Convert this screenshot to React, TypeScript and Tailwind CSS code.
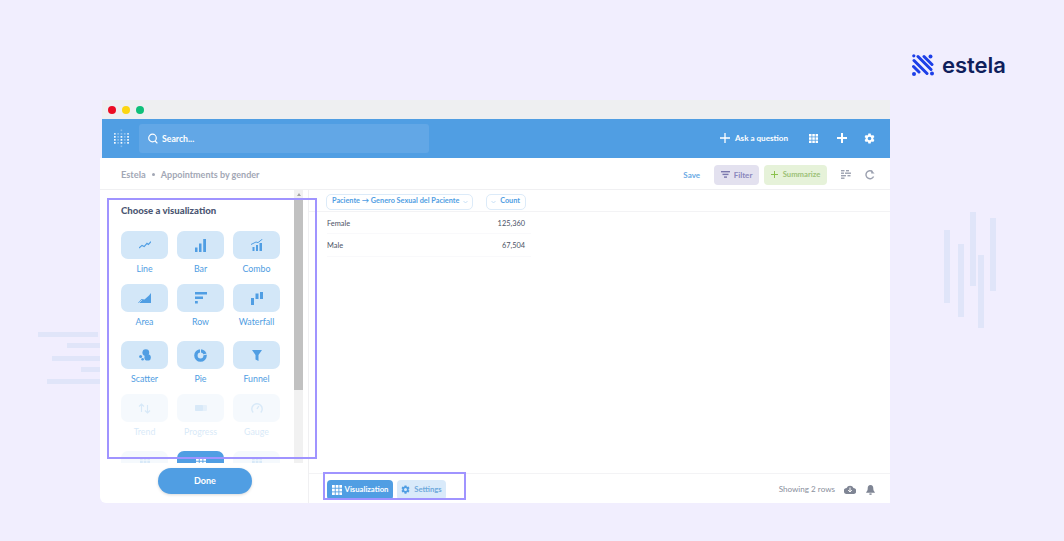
import React from "react";

const Dots = () => {
  const cols = [0, 3.3, 6.6, 9.9, 13.2];
  const rowsY = [4, 7, 10, 13];
  return (
    <svg width="15" height="19" viewBox="0 0 15 19" fill="#fff">
      <rect x="6.6" y="0.500" width="1.600" height="1.600" opacity=".3" />
      <rect x="6.6" y="16.500" width="1.600" height="1.600" opacity=".3" />
      {cols.flatMap((x, ci) =>
        rowsY.map((y, ri) => {
          const strong = (ci === 0 || ci === 2 || ci === 4) && ri !== 0 ? 0.95 : ri === 0 && ci % 4 === 0 ? 0.75 : 0.35;
          return <rect key={`${x}-${y}`} x={x} y={y} width="1.700" height="1.700" opacity={strong} />;
        })
      )}
    </svg>
  );
};

const Plus = ({ s = 10, w = 2, c = "#fff" }: { s?: number; w?: number; c?: string }) => (
  <svg width={s} height={s} viewBox="0 0 10 10" stroke={c} strokeWidth={w}><path d="M5 0v10M0 5h10" /></svg>
);

const Gear = ({ s = 11, c = "#fff" }: { s?: number; c?: string }) => (
  <svg width={s} height={s} viewBox="0 0 24 24">
    <path fill={c} fillRule="evenodd" d="M9.5 1h5l.7 3.2 1.900 1.100 3.100-1 2.500 4.400-2.400 2.200v2.200l2.400 2.200-2.500 4.400-3.100-1-1.900 1.100-.7 3.200h-5l-.7-3.200-1.900-1.100-3.100 1-2.500-4.400 2.400-2.200v-2.200L1.300 8.700l2.500-4.400 3.100 1 1.900-1.100zM12 8a4 4 0 1 0 0 8 4 4 0 0 0 0-8z" />
  </svg>
);

const Grid = ({ s = 9, c = "#fff" }: { s?: number; c?: string }) => (
  <svg width={s} height={s} viewBox="0 0 9 9" fill={c}>
    {[0, 3.3, 6.6].flatMap((x) => [0, 3.3, 6.6].map((y) => <rect key={`${x}-${y}`} x={x} y={y} width="2.500" height="2.500" />))}
  </svg>
);

const B = "#509ee3";
const icons: Record<string, React.ReactNode> = {
  Line: <svg width="12" height="8" viewBox="0 0 12 8" fill="none" stroke={B} strokeWidth="1.200"><path d="M0 7l3-2.600 2.200 1.200L8 2.400l1.400 1L12 .6" /></svg>,
  Bar: <svg width="11" height="13" viewBox="0 0 11 13" fill={B}><rect y="8.500" width="2.500" height="4.500" /><rect x="4" y="4.500" width="2.500" height="8.500" /><rect x="8.200" width="2.800" height="13" /></svg>,
  Combo: <svg width="12" height="12" viewBox="0 0 12 12" fill={B}><rect x="1.500" y="8" width="2" height="4" /><rect x="5" y="6" width="2" height="6" /><rect x="8.500" y="4" width="2.500" height="8" /><path d="M0 5.500L5 3l2 .6L11.500 0" fill="none" stroke={B} strokeWidth="1" /></svg>,
  Area: <svg width="13" height="10" viewBox="0 0 13 10" fill={B}><path d="M0 10l3.500-4 3 .5L11 2.500 13 0v10z" /><path d="M1 10l3-3" stroke="#d3e7f8" strokeWidth=".7" /></svg>,
  Row: <svg width="12" height="12" viewBox="0 0 12 12" fill={B}><rect width="12" height="2.500" /><rect y="4.500" width="8" height="2.500" /><rect y="9" width="2.800" height="2.500" /></svg>,
  Waterfall: <svg width="12" height="13" viewBox="0 0 12 13" fill={B}><rect y="6" width="3" height="7" /><rect x="4.500" y="1.500" width="3" height="5.500" /><rect x="9" width="3" height="7" /></svg>,
  Scatter: <svg width="12" height="12" viewBox="0 0 12 12" fill={B}><circle cx="6.800" cy="3.600" r="3.400" /><circle cx="8.600" cy="8.400" r="3.200" /><circle cx="1.600" cy="7.400" r="1.500" /><circle cx="3.600" cy="10.200" r="1.300" /></svg>,
  Pie: <svg width="13" height="13" viewBox="0 0 13 13" fill="none"><circle cx="6.500" cy="6.500" r="4.600" stroke={B} strokeWidth="3.400" /><path d="M6.500 6.500V0M6.500 6.500L13 5" stroke="#d3e7f8" strokeWidth="1" /></svg>,
  Funnel: <svg width="10" height="11" viewBox="0 0 10 11" fill={B}><path d="M0 0h10L6.500 5v6l-3-1.600V5z" /></svg>,
  Trend: <svg width="13" height="11" viewBox="0 0 13 11" fill="none" stroke={B} strokeWidth="1.100"><path d="M3.500 9V1M1 3.500L3.500 1 6 3.500M9.500 2v8M7 7.500l2.500 2.500L12 7.500" /></svg>,
  Progress: <svg width="12" height="6" viewBox="0 0 12 6"><rect width="12" height="6" rx="1" fill={B} opacity=".55" /><rect width="8" height="6" rx="1" fill={B} /></svg>,
  Gauge: <svg width="12" height="12" viewBox="0 0 12 12" fill="none" stroke={B} strokeWidth="1.400"><path d="M2.200 10.500A5.200 5.200 0 1 1 9.800 10.500" /><path d="M6 7l1.800-3" /></svg>,
};

const rows = [
  { names: ["Line", "Bar", "Combo"], mt: "mt-0" },
  { names: ["Area", "Row", "Waterfall"], mt: "mt-[6px]" },
  { names: ["Scatter", "Pie", "Funnel"], mt: "mt-[10px]" },
];
const faded = ["Trend", "Progress", "Gauge"];

const Tile = ({ name, dim }: { name: string; dim?: boolean }) => (
  <div className={`w-[47px] flex flex-col items-center ${dim ? "opacity-[0.22]" : ""}`}>
    <div className="w-[47px] h-[28px] rounded-[7px] bg-[#d3e7f8] flex items-center justify-center">{icons[name]}</div>
    <div className="h-[19px] flex items-center text-[8.800px] font-normal text-[#4f9de2] whitespace-nowrap">{name}</div>
  </div>
);

const App = () => (
  <div className="relative w-[1064px] h-[541px] overflow-hidden bg-[#f1eefe] font-['Lato',sans-serif]">
    {/* decorative bars */}
    {[[944, 230, 73], [958, 244, 73], [970, 212, 74], [978, 255, 73], [990, 218, 73]].map(([x, y, h]) => (
      <div key={x} className="absolute w-[6px] bg-[#e0e5f9]" style={{ left: x, top: y, height: h }} />
    ))}
    {[[38, 332, 60], [67, 343, 33], [52, 356, 48], [81, 367, 19], [47, 379, 53]].map(([x, y, w]) => (
      <div key={y} className="absolute h-[5px] bg-[#e0e5f9]" style={{ left: x, top: y, width: w }} />
    ))}

    {/* logo */}
    <div className="h-[100px] flex justify-end pr-[58px] pt-[54px]">
      <div className="flex items-start gap-[8px] h-[22px]">
        <svg width="22" height="22" viewBox="0 0 22 22" fill="#1d3fe8" stroke="none">
          <g stroke="#1d3fe8" strokeWidth="3" strokeLinecap="round" fill="none">
            <path d="M6 2.500L19 15.500M2 6.500L15 19.500M1.500 12.500L7 18M12 2.500L20 10.500" />
          </g>
          <circle cx="18.500" cy="2.500" r="2" />
          <circle cx="2" cy="20" r="2" />
          <circle cx="20" cy="19.500" r="2" />
          <circle cx="1.800" cy="1.800" r="1.600" />
        </svg>
        <span className="text-[22px] leading-[22px] font-semibold text-[#0f1f5c] font-['Inter',sans-serif]">estela</span>
      </div>
    </div>

    {/* window */}
    <div className="relative ml-[100px] w-[790px] h-[403px] rounded-bl-[6px] flex flex-col">
      <div className="ml-[2px] h-[19px] bg-[#eeeff1] flex items-center gap-[6px] pl-[6px] shrink-0">
        <span className="w-[8px] h-[8px] rounded-full bg-[#ec0d24]" />
        <span className="w-[8px] h-[8px] rounded-full bg-[#fcd60f]" />
        <span className="w-[8px] h-[8px] rounded-full bg-[#0fc07a]" />
      </div>

      <div className="ml-[2px] h-[39px] bg-[#509ee3] flex items-center shrink-0 pl-[12px] pr-[15px]">
        <Dots />
        <div className="ml-[10px] w-[290px] h-[29px] bg-[#62a7e6] rounded-[3px] flex items-center pl-[9px] gap-[4px]">
          <svg width="10" height="11" viewBox="0 0 10 11" fill="none" stroke="#fff" strokeWidth="1.200"><circle cx="4.500" cy="5" r="3.800" /><path d="M7.200 8l2.200 2.400" /></svg>
          <span className="text-[8.700px] font-bold text-white">Search...</span>
        </div>
        <div className="ml-auto flex items-center text-white">
          <Plus s={10} w={1.300} />
          <span className="ml-[5px] text-[8.100px] font-bold">Ask a question</span>
          <span className="ml-[21px] flex"><Grid /></span>
          <span className="ml-[19px] flex"><Plus s={10} w={2} /></span>
          <span className="ml-[17px] flex"><Gear /></span>
        </div>
      </div>

      <div className="bg-white h-[32px] border-b border-[#f0f0f2] flex items-center shrink-0 pl-[21px] pr-[15px] pt-[2px]">
        <span className="text-[9.300px] font-bold text-[#a2a7b5]">Estela</span>
        <span className="mx-[6px] w-[3px] h-[3px] rounded-full bg-[#a2a7b5]" />
        <span className="text-[9px] font-bold text-[#a2a7b5]">Appointments by gender</span>
        <div className="ml-auto flex items-center">
          <span className="text-[8px] font-bold text-[#6aa9e4]">Save</span>
          <div className="ml-[14px] w-[45px] h-[20px] rounded-[4px] bg-[#e3e1ef] flex items-center justify-center gap-[4px] text-[8px] font-bold text-[#8a87bd]">
            <svg width="9" height="7" viewBox="0 0 9 7" fill="#7a77ad"><rect width="9" height="1.400" /><rect x="1.500" y="2.700" width="6" height="1.400" /><rect x="3" y="5.400" width="3" height="1.400" /></svg>
            Filter
          </div>
          <div className="ml-[5px] w-[63px] h-[20px] rounded-[4px] bg-[#e6f2d9] flex items-center justify-center gap-[5px] text-[7.700px] font-bold text-[#9cc177]">
            <Plus s={7} w={1.400} c="#88bf4a" />
            Summarize
          </div>
          <svg className="ml-[14px]" width="10" height="9" viewBox="0 0 10 9" fill="#9ca1b0"><rect width="3.500" height="1.400" /><rect x="5" width="3" height="1.400" /><rect y="2.500" width="3" height="1.400" /><rect x="4" y="2.500" width="6" height="1.400" /><rect y="5" width="5" height="1.400" /><rect x="6.500" y="5" width="3" height="1.400" /><rect y="7.500" width="3.500" height="1.400" /></svg>
          <svg className="ml-[14px]" width="10" height="10" viewBox="0 0 10 10" fill="none" stroke="#9ca1b0" strokeWidth="1.400"><path d="M8.600 6.500A4 4 0 1 1 7.500 1.600" /><path d="M6.200 0v3.600h3.400" fill="#9ca1b0" stroke="none" /></svg>
        </div>
      </div>

      <div className="flex-1 min-h-0 flex bg-white rounded-bl-[6px]">
        {/* sidebar */}
        <div className="w-[209px] shrink-0 border-r border-[#f0f0f2] flex flex-col">
          <div className="h-[273px] flex overflow-hidden">
            <div className="w-[194px] shrink-0 pl-[21px] pt-[15px] overflow-hidden">
              <div className="h-[13px] flex items-center text-[9.600px] font-black text-[#4c5773] whitespace-nowrap">Choose a visualization</div>
              <div className="mt-[13px] w-[159px] flex flex-col">
                {rows.map((r) => (
                  <div key={r.names[0]} className={`flex justify-between ${r.mt}`}>
                    {r.names.map((n) => <Tile key={n} name={n} />)}
                  </div>
                ))}
                <div className="flex justify-between mt-[6px]">
                  {faded.map((n) => <Tile key={n} name={n} dim />)}
                </div>
                <div className="flex justify-between mt-[10px]">
                  <div className="w-[47px] h-[28px] rounded-[7px] bg-[#d3e7f8] opacity-[0.22] flex justify-center pt-[6px]"><Grid s={10} c={B} /></div>
                  <div className="w-[47px] h-[28px] rounded-[7px] bg-[#509ee3] flex justify-center pt-[7px]"><Grid s={10} /></div>
                  <div className="w-[47px] h-[28px] rounded-[7px] bg-[#d3e7f8] opacity-[0.22] flex justify-center pt-[6px]"><Grid s={10} c={B} /></div>
                </div>
              </div>
            </div>
            <div className="w-[9px] shrink-0 bg-[#f1f1f1] flex flex-col items-center">
              <div className="h-[9px] flex items-center justify-center">
                <span className="w-0 h-0 border-x-[2.500px] border-x-transparent border-b-[3px] border-b-[#a3a3a3]" />
              </div>
              <div className="w-full h-[191px] bg-[#c1c1c1]" />
            </div>
          </div>
          <div className="flex justify-center pt-[5px] pl-[2px]">
            <div className="w-[94px] h-[26px] rounded-full bg-[#509ee3] shadow-[0_1px_3px_rgba(0,0,0,0.15)] flex items-center justify-center text-[9px] font-bold text-white">Done</div>
          </div>
        </div>

        {/* main */}
        <div className="flex-1 min-w-0 flex flex-col">
          <div className="flex-1 min-h-0">
            <div className="h-[22px] border-b border-[#f3f3f5] flex items-center pl-[17px] pt-[2px]">
              <div className="h-[16px] w-[147px] rounded-[5px] border border-[#dcebf9] flex items-center pl-[5px] text-[7.300px] font-bold text-[#509ee3] whitespace-nowrap">
                Paciente → Genero Sexual del Paciente
                <svg className="ml-[4px]" width="5" height="4" viewBox="0 0 5 4" fill="none" stroke="#b9d8f4" strokeWidth=".8"><path d="M.5 1l2 2 2-2" /></svg>
              </div>
              <div className="ml-[13px] h-[16px] w-[40px] rounded-[5px] border border-[#dcebf9] flex items-center justify-end gap-[4px] pr-[5px] text-[7.300px] font-bold text-[#509ee3]">
                <svg width="5" height="4" viewBox="0 0 5 4" fill="none" stroke="#b9d8f4" strokeWidth=".8"><path d="M.5 1l2 2 2-2" /></svg>
                Count
              </div>
            </div>
            <div className="w-[204px] ml-[18px] pr-[6px] pt-[2px] h-[22px] border-b border-[#f9f9fb] flex items-center justify-between text-[7.400px] font-normal text-[#4c5366]">
              <span>Female</span><span>125,360</span>
            </div>
            <div className="w-[204px] ml-[18px] pr-[6px] pt-[1px] h-[23px] border-b border-[#f9f9fb] flex items-center justify-between text-[7.400px] font-normal text-[#4c5366]">
              <span>Male</span><span>67,504</span>
            </div>
          </div>
          <div className="h-[30px] border-t border-[#f3f3f5] flex items-center pl-[18px] pr-[15px] pt-[2px] shrink-0">
            <div className="h-[20px] w-[66px] rounded-[4px] bg-[#509ee3] flex items-center justify-center gap-[3px] text-[7.700px] font-bold text-white">
              <Grid s={10} />Visualization
            </div>
            <div className="ml-[4px] h-[20px] w-[49px] rounded-[4px] bg-[#d9eafa] flex items-center justify-center gap-[4px] text-[7.700px] font-bold text-[#6fa9dc]">
              <Gear s={9} c={B} />Settings
            </div>
            <span className="ml-auto text-[8.100px] text-[#8a8f9d] font-normal">Showing 2 rows</span>
            <svg className="ml-[9px]" width="12" height="9" viewBox="0 0 12 9" fill="#7f8594"><path d="M3 9a3 3 0 0 1-.4-6A3.700 3.700 0 0 1 9.500 3 3 3 0 0 1 9 9z" /><path d="M6 2.500v4M4.200 5L6 7l1.800-2" stroke="#fff" strokeWidth="1" fill="none" /></svg>
            <svg className="ml-[10px]" width="9" height="10" viewBox="0 0 9 10" fill="#7f8594"><path d="M4.500 0C6.500 0 7.300 1.600 7.300 3.400c0 2 .7 2.800 1.500 3.600v.8H.2V7c.8-.8 1.500-1.600 1.500-3.600C1.700 1.600 2.500 0 4.500 0z" /><rect x="3.400" y="8.400" width="2.200" height="1.400" /></svg>
          </div>
        </div>
      </div>

      {/* highlights */}
      <div className="absolute left-[7px] top-[98px] w-[210px] h-[261px] border-2 border-[#a094ff] pointer-events-none" />
      <div className="absolute left-[223px] top-[372px] w-[143px] h-[28px] border-2 border-[#a094ff] pointer-events-none" />
    </div>
  </div>
);

export default App;
